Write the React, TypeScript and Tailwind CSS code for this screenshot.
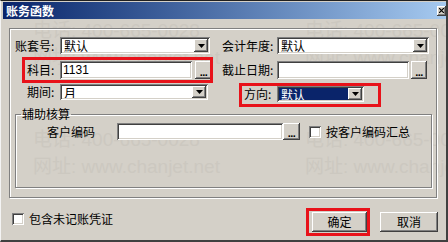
import React from "react";

const sunken =
  "shadow-[inset_1px_1px_0_#808080,inset_-1px_-1px_0_#ffffff,inset_2px_2px_0_#404040,inset_-2px_-2px_0_#d4d0c8]";
const raised =
  "shadow-[inset_-1px_-1px_0_#404040,inset_1px_1px_0_#ffffff,inset_-2px_-2px_0_#808080,inset_2px_2px_0_#d4d0c8]";

function Arrow() {
  return (
    <svg width="7" height="4" viewBox="0 0 7 4">
      <polygon points="0,0 7,0 3.5,4" fill="#000" />
    </svg>
  );
}

function Combo({
  cls,
  text,
  selected,
}: {
  cls: string;
  text: string;
  selected?: boolean;
}) {
  return (
    <div className={`flex bg-white p-[2px] ${sunken} ${cls}`}>
      <div className="flex flex-1 items-center overflow-hidden">
        <span
          className={
            selected
              ? "h-full flex-1 bg-[#0a246a] pl-[2px] leading-[13px] text-white outline-dotted outline-1 outline-[#8a8a8a]"
              : "pl-[2px] leading-[13px]"
          }
        >
          {text}
        </span>
      </div>
      <div
        className={`flex w-[14px] items-center justify-center bg-[#d4d0c8] ${raised}`}
      >
        <Arrow />
      </div>
    </div>
  );
}

function Field({ cls, text }: { cls: string; text?: string }) {
  return (
    <div className={`flex items-center bg-white p-[2px] pl-[3px] ${sunken} ${cls}`}>
      <span className="font-['Liberation_Sans',sans-serif] text-[12px] leading-[13px]">
        {text}
      </span>
    </div>
  );
}

function Dots({ cls }: { cls: string }) {
  return (
    <div
      className={`flex items-center justify-center bg-[#d4d0c8] ${raised} ${cls}`}
    >
      <span className="mt-[3px] font-['Liberation_Sans',sans-serif] text-[11px] font-bold leading-[10px] tracking-[-0.5px]">
        ...
      </span>
    </div>
  );
}

function Check() {
  return <div className={`h-[12px] w-[12px] bg-white ${sunken}`} />;
}

function Watermark({ top, left, text }: { top: string; left: string; text: string }) {
  return (
    <div
      className={`pointer-events-none absolute whitespace-nowrap font-['Liberation_Sans','Noto_Sans_CJK_SC',sans-serif] text-[19px] leading-[20px] text-[#ccc8c0] ${top} ${left}`}
    >
      {text}
    </div>
  );
}

export default function App() {
  return (
    <div className="relative h-[242px] w-[448px] overflow-hidden border-t border-l border-r-2 border-b-2 border-t-[#202020] border-l-[#f4f4f4] border-r-[#404040] border-b-[#404040] bg-[#d4d0c8] font-['Noto_Sans_CJK_SC','Noto_Sans',sans-serif] text-[12px] leading-[14px] text-black">
      {/* watermark */}
      <Watermark top="top-[20px]" left="left-[32px]" text="电话: 400-665-0028" />
      <Watermark top="top-[20px]" left="left-[304px]" text="电话: 400-665-0028" />
      <Watermark top="top-[47px]" left="left-[32px]" text="网址: www.chanjet.net" />
      <Watermark top="top-[47px]" left="left-[304px]" text="网址: www.chanjet.net" />
      <Watermark top="top-[129px]" left="left-[32px]" text="电话: 400-665-0028" />
      <Watermark top="top-[129px]" left="left-[304px]" text="电话: 400-665-0028" />
      <Watermark top="top-[156px]" left="left-[32px]" text="网址: www.chanjet.net" />
      <Watermark top="top-[156px]" left="left-[304px]" text="网址: www.chanjet.net" />

      <div className="relative flex flex-col">
        {/* title bar */}
        <div className="ml-[2px] mt-[1px] flex h-[17px] w-[443px] items-center justify-between bg-linear-to-r from-[#0a246a] to-[#a6caf0]">
          <span className="pl-[3px] text-[12px] font-bold leading-[14px] text-white">
            账务函数
          </span>
          <div className={`mr-0 flex h-[10px] w-[9px] items-center justify-center bg-[#d4d0c8] ${raised}`}>
            <svg width="5" height="5" viewBox="0 0 5 5">
              <path d="M0 0L5 5M5 0L0 5" stroke="#000" strokeWidth="1.2" />
            </svg>
          </div>
        </div>

        {/* outer group */}
        <div className="ml-[8px] mt-[9px] flex h-[170px] w-[428px] flex-col border border-[#808080] shadow-[inset_1px_1px_0_#ffffff,1px_1px_0_#ffffff]">
          {/* row 1 */}
          <div className="mt-[8px] flex h-[17px] items-center pl-[5px]">
            <div className="flex w-[207px] items-center">
              <span className="w-[45px]">账套号:</span>
              <Combo cls="h-[17px] w-[150px]" text="默认" />
            </div>
            <div className="flex items-center">
              <span className="w-[55px]">会计年度:</span>
              <Combo cls="h-[17px] w-[152px]" text="默认" />
            </div>
          </div>

          {/* row 2 */}
          <div className="mt-[7px] flex h-[18px] items-center pl-[5px]">
            <div className="flex w-[207px] items-center">
              <span className="w-[45px] pl-[12px]">科目:</span>
              <Field cls="h-[18px] w-[132px]" text="1131" />
              <Dots cls="ml-[3px] h-[18px] w-[17px]" />
            </div>
            <div className="flex items-center">
              <span className="w-[55px]">截止日期:</span>
              <Field cls="h-[18px] w-[132px]" />
              <Dots cls="ml-[2px] h-[18px] w-[16px]" />
            </div>
          </div>

          {/* row 3 */}
          <div className="mt-[5px] flex items-start pl-[5px]">
            <div className="flex w-[207px] items-center">
              <span className="w-[45px] pl-[12px]">期间:</span>
              <Combo cls="h-[16px] w-[148px]" text="月" />
            </div>
            <div className="mt-[2px] flex items-center pl-[22px]">
              <span className="w-[33px]">方向:</span>
              <Combo cls="h-[16px] w-[87px]" text="默认" selected />
            </div>
          </div>

          {/* inner group */}
          <fieldset className="ml-[5px] mt-[5px] h-[81px] w-[417px] border border-[#808080] shadow-[inset_1px_1px_0_#ffffff,1px_1px_0_#ffffff]">
            <legend className="ml-[5px] px-[1px] leading-[14px]">辅助核算</legend>
            <div className="mt-[2px] flex h-[17px] items-center pl-[31px]">
              <span className="w-[70px]">客户编码</span>
              <Field cls="h-[17px] w-[166px]" />
              <Dots cls="h-[17px] w-[17px]" />
              <div className="ml-[9px]">
                <Check />
              </div>
              <span className="ml-[5px]">按客户编码汇总</span>
            </div>
          </fieldset>
        </div>

        {/* bottom row */}
        <div className="mt-[14px] flex items-start">
          <div className="ml-[11px] flex items-center">
            <Check />
            <span className="ml-[5px]">包含未记账凭证</span>
          </div>
          <div className="ml-auto mr-[8px] flex items-center gap-[13px]">
            <div className={`flex h-[20px] w-[55px] items-center justify-center bg-[#d4d0c8] ${raised}`}>
              确定
            </div>
            <div className={`flex h-[20px] w-[58px] items-center justify-center bg-[#d4d0c8] ${raised}`}>
              取消
            </div>
          </div>
        </div>
      </div>

      {/* red annotation boxes */}
      <div className="pointer-events-none absolute left-[21px] top-[56px] h-[26px] w-[191px] border-[3px] border-[#e8121a]" />
      <div className="pointer-events-none absolute left-[238px] top-[82px] h-[24px] w-[142px] border-[3px] border-[#e8121a]" />
      <div className="pointer-events-none absolute left-[305px] top-[207px] h-[28px] w-[64px] border-[3px] border-[#e8121a]" />
    </div>
  );
}
